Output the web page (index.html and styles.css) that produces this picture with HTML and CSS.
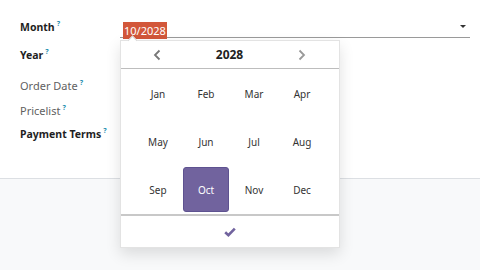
FILE: index.html
```html
<!DOCTYPE html>
<html>
<head>
<meta charset="utf-8">
<link rel="stylesheet" href="styles.css">
</head>
<body>
<div class="page">
  <div class="sheet">
    <div class="form">
      <div class="label strong">Month<sup class="help">?</sup></div>
      <div class="field">
        <div class="input"><span class="sel">10/2028</span></div>
        <span class="caret"></span>
      </div>
      <div class="label strong">Year<sup class="help">?</sup></div>
      <div class="field"></div>
      <div class="label muted">Order Date<sup class="help">?</sup></div>
      <div class="field"></div>
      <div class="label muted">Pricelist<sup class="help">?</sup></div>
      <div class="field"></div>
      <div class="label strong">Payment Terms<sup class="help">?</sup></div>
      <div class="field"></div>
    </div>
  </div>

  <div class="picker">
    <span class="tip"></span>
    <div class="picker-head">
      <svg class="chev" width="8" height="12" viewBox="0 0 8 12"><path d="M6.5 1.5 L2 6 L6.5 10.5" fill="none" stroke="#777" stroke-width="1.8"/></svg>
      <span class="year">2028</span>
      <svg class="chev" width="8" height="12" viewBox="0 0 8 12"><path d="M1.5 1.5 L6 6 L1.5 10.5" fill="none" stroke="#999" stroke-width="1.8"/></svg>
    </div>
    <div class="months">
      <span class="m">Jan</span><span class="m">Feb</span><span class="m">Mar</span><span class="m">Apr</span>
      <span class="m">May</span><span class="m">Jun</span><span class="m">Jul</span><span class="m">Aug</span>
      <span class="m">Sep</span><span class="m active">Oct</span><span class="m">Nov</span><span class="m">Dec</span>
    </div>
    <div class="picker-foot">
      <svg width="12" height="10" viewBox="0 0 12 10"><path d="M1.2 5.2 L4.4 8.2 L10.8 1.6" fill="none" stroke="#71639e" stroke-width="2.6"/></svg>
    </div>
  </div>
</div>
</body>
</html>
```
FILE: styles.css
```css
* { box-sizing: border-box; }
html, body { margin: 0; padding: 0; }
body { font-family: "Noto Sans", "Open Sans", sans-serif; color: #222; }
.page {
  position: relative;
  width: 480px;
  height: 270px;
  background: #f8f9fa;
  overflow: hidden;
}
.sheet {
  height: 179px;
  background: #fff;
  border-bottom: 1px solid #dcdfe3;
}
.form {
  display: grid;
  grid-template-columns: 100px 350px;
  grid-template-rows: 22px 34px 26px 24px 24px;
  padding: 16px 0 0 20px;
  align-items: center;
}
.label { font-size: 11px; white-space: nowrap; }
.label.strong { font-weight: 700; color: #1f1f1f; font-size: 10.5px; }
.label.muted { font-weight: 400; color: #5f5f5f; }
.help {
  font-size: 7px;
  font-weight: 700;
  color: #1c8dae;
  margin-left: 2px;
  vertical-align: 5px;
  line-height: 0;
}
.field { position: relative; height: 22px; }
.input {
  height: 22px;
  border-bottom: 1px solid #9a9a9a;
  padding: 2px 0 0 3px;
}
.sel {
  display: inline-block;
  background: #d2573a;
  color: #fff;
  font-size: 11px;
  line-height: 17px;
  padding: 0 1px;
}
.caret {
  position: absolute;
  right: 4px;
  top: 9px;
  width: 0;
  height: 0;
  border-left: 3px solid transparent;
  border-right: 3px solid transparent;
  border-top: 3px solid #333;
}
.picker {
  position: absolute;
  left: 120px;
  top: 40px;
  width: 220px;
  height: 208px;
  background: #fff;
  border: 1px solid #e3e3e3;
  box-shadow: 0 6px 14px rgba(0,0,0,0.12);
  display: flex;
  flex-direction: column;
}
.tip {
  position: absolute;
  left: 8px;
  top: -4px;
  width: 7px;
  height: 7px;
  background: #fff;
  border-left: 1px solid #d8d8d8;
  border-top: 1px solid #d8d8d8;
  transform: rotate(45deg);
}
.picker-head {
  height: 28px;
  border-bottom: 1px solid #bdbdbd;
  display: flex;
  align-items: center;
  justify-content: space-between;
  padding: 0 33px 0 32px;
}
.year { font-size: 12px; font-weight: 700; color: #222; }
.months {
  display: grid;
  grid-template-columns: repeat(4, 48px);
  grid-auto-rows: 48px;
  padding: 0 13px;
  height: 147px;
  border-bottom: 2px solid #c8c8c8;
}
.m {
  display: flex;
  align-items: center;
  justify-content: center;
  margin: 2px 1px 1px 1px;
  font-size: 10px;
  color: #333;
  border-radius: 3px;
}
.m.active {
  background: #71639e;
  color: #fff;
  border: 1px solid #5e5290;
}
.picker-foot {
  flex: 1;
  display: flex;
  align-items: center;
  justify-content: center;
}
```
